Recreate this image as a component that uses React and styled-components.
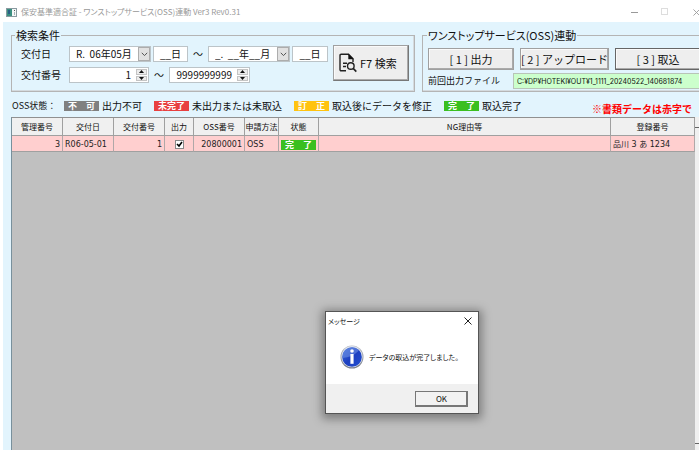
import React from "react";
import styled, { createGlobalStyle, css } from "styled-components";

const Global = createGlobalStyle`
  * { box-sizing: border-box; }
  html, body, #root { height: 100%; margin: 0; }
  body { background: #fff; overflow: hidden; }
  body, button, input, select {
    font-family: "Noto Sans CJK JP", "Noto Sans", sans-serif;
    font-size: 10px;
    line-height: 14px;
    color: #111;
  }
`;

const Window = styled.div`
  position: relative;
  display: flex;
  flex-direction: column;
  height: 100vh;
  overflow: hidden;
`;

const TitleBar = styled.header`
  display: flex;
  align-items: center;
  flex: none;
  height: 22px;
  padding: 2px 0 0 6px;
  gap: 4px;
  color: #999;
  background: #fff;
`;

const TitleText = styled.h1`
  flex: 1;
  margin: 0;
  font-size: 8px;
  line-height: 12px;
  font-weight: 400;
  white-space: nowrap;
  font-feature-settings: "palt";
`;

const CaptionButton = styled.button`
  display: flex;
  align-items: center;
  justify-content: center;
  flex: none;
  width: 26px;
  height: 18px;
  padding: 0;
  border: 0;
  background: none;
`;

const CaptionButtons = styled.div`
  display: flex;
  flex: none;
  gap: 5px;
  margin-right: -10px;
`;

const Client = styled.main`
  display: flex;
  flex-direction: column;
  flex: 1;
  min-height: 0;
  margin-left: 3px;
  padding: 6px 0 0 8px;
  background: #e2f4fd;
`;

const Groups = styled.div`
  display: flex;
  flex: none;
  gap: 7px;
`;

const Group = styled.fieldset`
  min-width: 0;
  margin: 0;
  border: 1px solid #b4b4b4;
  box-shadow: inset -1px -1px 0 #d4dade;
  flex: ${(p) => (p.$grow ? "1 0 0" : "none")};
  margin-right: ${(p) => (p.$grow ? "-10px" : "0")};
  padding: ${(p) => (p.$grow ? "6px 7px 2px 5px" : "4px 5px 8px 9px")};
`;

const Legend = styled.legend`
  margin-left: ${(p) => (p.$flush ? "-1px" : "-6px")};
  padding: 0 1px;
  font-size: 11px;
  line-height: 14px;
  font-feature-settings: ${(p) => (p.$flush ? '"palt"' : "normal")};
`;

const SearchForm = styled.div`
  display: flex;
  gap: 6px;
`;

const FieldRows = styled.div`
  display: flex;
  flex-direction: column;
  gap: 5px;
  width: 306px;
`;

const FieldRow = styled.div`
  display: flex;
  align-items: center;
  height: 16px;
`;

const FieldLabel = styled.label`
  flex: none;
  width: 48px;
  white-space: nowrap;
`;

const Tilde = styled.span`
  flex: none;
  width: 20px;
  text-align: center;
`;

const Frame = styled.div`
  display: flex;
  flex: none;
  height: 16px;
  background: #fff;
  border: 1px solid #bcc4c8;
  width: ${(p) => p.$width}px;
`;

const TextInput = styled.input`
  flex: 1;
  min-width: 0;
  height: 14px;
  padding: 0 5px;
  border: 0;
  outline: 0;
  background: transparent;
  text-align: ${(p) => p.$align || "left"};
`;

const ComboFrame = styled(Frame)`
  display: grid;
  grid-template-columns: 1fr 12px;
  margin-right: 2px;
`;

const ComboSelect = styled.select`
  grid-area: 1 / 1 / 2 / 3;
  appearance: none;
  height: 14px;
  padding: 0 12px 0 6px;
  border: 0;
  outline: 0;
  background: transparent;
`;

const ComboArrow = styled.span`
  grid-area: 1 / 2 / 2 / 3;
  display: flex;
  align-items: center;
  justify-content: center;
  background: #e1e1e1;
  border: 1px solid #adadad;
  pointer-events: none;
`;

const Spinner = styled.div`
  display: flex;
  flex-direction: column;
  flex: none;
  width: 12px;
  padding: 1px 1px 1px 0;
  gap: 1px;
`;

const SpinButton = styled.button`
  display: flex;
  align-items: center;
  justify-content: center;
  flex: 1;
  min-height: 0;
  padding: 0;
  border: 1px solid #c4c4c4;
  background: #ececec;
`;

const raised = css`
  border: 1px solid #a0a0a0;
  border-right-color: #777;
  border-bottom-color: #777;
  box-shadow: inset -1px -1px 0 #aaa, inset 1px 1px 0 #fafafa;
  background: #eee;
`;

const SearchButton = styled.button`
  ${raised}
  display: flex;
  align-items: center;
  gap: 3px;
  width: 76px;
  height: 36px;
  margin-top: -1px;
  padding: 0 5px;
  font-size: 11px;
  white-space: nowrap;
`;

const Actions = styled.div`
  display: grid;
  grid-template-columns: repeat(3, 1fr);
  gap: 6px;
`;

const ActionButton = styled.button`
  ${raised}
  height: 22px;
  padding: 0;
  font-size: 11px;
  white-space: nowrap;
  border-color: ${(p) => (p.$active ? "#666" : "#a0a0a0")};
`;

const OutputRow = styled.div`
  display: flex;
  align-items: center;
  margin-top: 3px;
`;

const OutputLabel = styled.label`
  flex: none;
  width: 85px;
  white-space: nowrap;
  font-size: 9px;
`;

const OutputPath = styled.input`
  flex: 1;
  min-width: 0;
  height: 16px;
  padding: 0 3px;
  border: 1px solid #b8c4b8;
  background: #ccffcc;
  font-family: Inter, "Noto Sans CJK JP", sans-serif;
  font-size: 7px;
`;

const StatusBar = styled.div`
  display: flex;
  align-items: center;
  flex: none;
  height: 25px;
  padding: 3px 0 0 1px;
  white-space: nowrap;
`;

const StatusTitle = styled.span`
  flex: none;
  width: 52px;
  font-size: 9px;
`;

const StatusItem = styled.span`
  display: flex;
  align-items: center;
  flex: none;
  gap: 3px;
  margin-right: 12px;
`;

const Badge = styled.span`
  display: block;
  width: 35px;
  height: 10px;
  background: ${(p) => p.$color};
  color: #fff;
  font-size: 9px;
  line-height: 10px;
  font-weight: 700;
  text-align: center;
  white-space: pre;
`;

const Warning = styled.strong`
  flex: none;
  margin-left: 58px;
  padding-top: 5px;
  color: #f00;
`;

const GridArea = styled.div`
  display: flex;
  flex: 1;
  min-height: 0;
`;

const GridPane = styled.div`
  flex: 1;
  min-width: 0;
  background: #c0c0c0;
  border-top: 1px solid #909090;
  border-left: 1px solid #78909c;
`;

const Grid = styled.table`
  width: 100%;
  table-layout: fixed;
  border-collapse: separate;
  border-spacing: 0;
  font-size: 9px;
  line-height: 12px;
`;

const Col = styled.col`
  width: ${(p) => (p.$width ? `${p.$width}px` : "auto")};
`;

const HeadCell = styled.th`
  height: 18px;
  padding: 0;
  font-weight: 400;
  font-size: 8px;
  white-space: nowrap;
  background: #f0f0f0;
  border-right: 1px solid #a0a0a0;
  border-bottom: 1px solid #a0a0a0;
`;

const Cell = styled.td`
  height: 16px;
  padding: 2px 2px 0;
  background: #ffcfcf;
  border-right: 1px solid #b0a8a8;
  border-bottom: 1px solid #a0a0a0;
  font-family: "DejaVu Sans", "Noto Sans CJK JP", sans-serif;
  font-size: 8px;
  color: #222;
  white-space: nowrap;
  text-align: ${(p) => p.$align || "left"};
`;

const Tick = styled.input`
  appearance: none;
  display: block;
  width: 9px;
  height: 9px;
  margin: 0 auto;
  border: 1px solid #888;
  background: #fff;
  &:checked {
    background: #fff url("data:image/svg+xml,%3Csvg xmlns='http://www.w3.org/2000/svg' viewBox='0 0 7 7'%3E%3Cpath d='M1 3l2 2 3-4' fill='none' stroke='%23000' stroke-width='1.6'/%3E%3C/svg%3E") center / 7px 7px;
  }
`;

const ScrollTrack = styled.div`
  flex: none;
  display: flex;
  flex-direction: column;
  justify-content: space-between;
  width: 4px;
  padding: 10px 0 6px;
  background: #f0f0f0;
`;

const ScrollLine = styled.span`
  height: 1px;
  background: #666;
`;

const Dialog = styled.section`
  position: absolute;
  left: 325px;
  top: 311px;
  width: 154px;
  border: 1px solid #555;
  background: #fff;
  box-shadow: 0 2px 9px 3px rgba(0, 0, 0, 0.35);
  font-size: 7px;
  font-feature-settings: "palt";
`;

const DialogHead = styled.div`
  display: flex;
  align-items: center;
  justify-content: space-between;
  height: 18px;
  padding-left: 2px;
`;

const DialogTitle = styled.h2`
  margin: 0;
  font-size: 7px;
  line-height: 12px;
  font-weight: 400;
`;

const CloseButton = styled.button`
  display: flex;
  align-items: center;
  justify-content: center;
  width: 21px;
  height: 18px;
  padding: 0;
  border: 0;
  background: none;
`;

const DialogBody = styled.div`
  display: flex;
  align-items: center;
  gap: 5px;
  height: 54px;
  padding: 0 0 0 14px;
  white-space: nowrap;
`;

const DialogFoot = styled.div`
  display: flex;
  justify-content: flex-end;
  padding: 7px 10px 6px;
  background: #f0f0f0;
`;

const OkButton = styled.button`
  width: 53px;
  height: 16px;
  padding: 0;
  border: 1px solid #777;
  box-shadow: inset -1px -1px 0 #777;
  background: #f2f2f2;
  font-size: 8px;
  line-height: 12px;
`;

const AppIcon = () => (
  <svg width="11" height="9" viewBox="0 0 11 9" aria-hidden="true">
    <rect x="0.5" y="0.5" width="10" height="8" fill="#f4f7f7" stroke="#8a9aa0" />
    <rect x="1" y="1" width="5" height="7" fill="#3a8f80" />
    <rect x="2" y="2" width="2" height="4" fill="#2b5f86" />
    <rect x="8" y="2" width="1" height="1" fill="#555" />
    <rect x="8" y="4" width="1" height="3" fill="#a9b4b8" />
  </svg>
);

const SearchIcon = () => (
  <svg width="18" height="20" viewBox="0 0 18 20" fill="none" stroke="#222" strokeWidth="1.4" aria-hidden="true">
    <path d="M7 17.8H2.2Q1 17.8 1 16.4V2.4Q1 1.2 2.2 1.2H9.5L14 5.8V9" />
    <path d="M9.3 0.8V6.2H14.8Z" fill="#111" stroke="none" />
    <path d="M4 10.3H8M4 13.5H7" />
    <circle cx="11.8" cy="13" r="3.3" />
    <path d="M14.2 15.4L17.3 18.6" strokeWidth="1.6" />
  </svg>
);

const Chevron = () => (
  <svg width="7" height="5" viewBox="0 0 7 5" aria-hidden="true">
    <path d="M0.8 0.8L3.5 3.6L6.2 0.8" fill="none" stroke="#555" />
  </svg>
);

const Triangle = ({ up }) => (
  <svg width="5" height="3" viewBox="0 0 5 3" aria-hidden="true">
    <path d={up ? "M0 3L2.5 0L5 3Z" : "M0 0L2.5 3L5 0Z"} fill="#111" />
  </svg>
);

const Cross = ({ color, size }) => (
  <svg width={size} height={size} viewBox="0 0 8 8" aria-hidden="true">
    <path d="M0.5 0.5L7.5 7.5M7.5 0.5L0.5 7.5" stroke={color} fill="none" />
  </svg>
);

const InfoIcon = () => (
  <svg width="24" height="24" viewBox="0 0 24 24" aria-hidden="true">
    <defs>
      <linearGradient id="rim" x1="0" y1="0" x2="0" y2="1">
        <stop offset="0" stopColor="#b8bcc4" />
        <stop offset="1" stopColor="#777c88" />
      </linearGradient>
      <linearGradient id="ball" x1="0" y1="0" x2="1" y2="1">
        <stop offset="0" stopColor="#3f6fdc" />
        <stop offset="0.5" stopColor="#1d3fc0" />
        <stop offset="1" stopColor="#2450d0" />
      </linearGradient>
    </defs>
    <circle cx="12" cy="12" r="11.5" fill="url(#rim)" />
    <circle cx="12" cy="11.7" r="10.6" fill="#dfe4ee" />
    <circle cx="12" cy="12" r="9.8" fill="url(#ball)" />
    <path d="M2.6 13A9.5 9.5 0 0 1 19 5.5Q12 12.5 2.6 13Z" fill="#7296e6" opacity="0.55" />
    <circle cx="12" cy="6" r="1.8" fill="#fff" />
    <path d="M10.4 9H13.6V18.8H10.4Z" fill="#fff" />
  </svg>
);

const Combo = ({ id, label, value }) => (
  <ComboFrame $width={82}>
    <ComboSelect id={id} aria-label={label} defaultValue={value}>
      <option>{value}</option>
    </ComboSelect>
    <ComboArrow><Chevron /></ComboArrow>
  </ComboFrame>
);

const DayField = ({ label, width }) => (
  <Frame $width={width}>
    <TextInput aria-label={label} defaultValue="__日" $align="center" />
  </Frame>
);

const NumberField = ({ id, label, value, width }) => (
  <Frame $width={width}>
    <TextInput id={id} aria-label={label} defaultValue={value} $align="right" />
    <Spinner>
      <SpinButton aria-label="増やす"><Triangle up /></SpinButton>
      <SpinButton aria-label="減らす"><Triangle /></SpinButton>
    </Spinner>
  </Frame>
);

const statuses = [
  { badge: "不　可", color: "#808080", text: "出力不可" },
  { badge: "未完了", color: "#e84040", text: "未出力または未取込" },
  { badge: "訂　正", color: "#ffc310", text: "取込後にデータを修正" },
  { badge: "完　了", color: "#3abf20", text: "取込完了" },
];

const columns = [
  ["管理番号", 51], ["交付日", 51], ["交付番号", 51], ["出力", 29], ["OSS番号", 51],
  ["申請方法", 34], ["状態", 40], ["NG理由等", 0], ["登録番号", 84],
];

export default function App() {
  return (
    <Window>
      <Global />
      <TitleBar>
        <AppIcon />
        <TitleText>保安基準適合証 - ワンストップサービス(OSS)連動 Ver3 Rev0.31</TitleText>
        <CaptionButtons>
          <CaptionButton aria-label="最小化">
            <svg width="7" height="7" viewBox="0 0 7 7"><path d="M0 3.5H7" stroke="#999" /></svg>
          </CaptionButton>
          <CaptionButton aria-label="最大化">
            <svg width="8" height="8" viewBox="0 0 8 8"><rect x="0.5" y="0.5" width="6" height="6" fill="none" stroke="#ddd" /></svg>
          </CaptionButton>
          <CaptionButton aria-label="閉じる"><Cross color="#999" size={7} /></CaptionButton>
        </CaptionButtons>
      </TitleBar>
      <Client>
        <Groups>
          <Group>
            <Legend>検索条件</Legend>
            <SearchForm>
              <FieldRows>
                <FieldRow>
                  <FieldLabel htmlFor="month-from">交付日</FieldLabel>
                  <Combo id="month-from" value="R.&nbsp; 06年05月" />
                  <DayField label="交付日 開始日" width={35} />
                  <Tilde>～</Tilde>
                  <Combo label="交付日 終了月" value="_.&nbsp; __年__月" />
                  <DayField label="交付日 終了日" width={36} />
                </FieldRow>
                <FieldRow>
                  <FieldLabel htmlFor="number-from">交付番号</FieldLabel>
                  <NumberField id="number-from" value="1" width={80} />
                  <Tilde>～</Tilde>
                  <NumberField label="交付番号 終了" value="9999999999" width={81} />
                </FieldRow>
              </FieldRows>
              <SearchButton><SearchIcon />F7 検索</SearchButton>
            </SearchForm>
          </Group>
          <Group $grow>
            <Legend $flush>ワンストップサービス(OSS)連動</Legend>
            <Actions>
              <ActionButton>[ 1 ] 出力</ActionButton>
              <ActionButton>[ 2 ] アップロード</ActionButton>
              <ActionButton $active>[ 3 ] 取込</ActionButton>
            </Actions>
            <OutputRow>
              <OutputLabel htmlFor="output-path">前回出力ファイル</OutputLabel>
              <OutputPath id="output-path" readOnly value="C:¥DP¥HOTEKI¥OUT¥1_1111_20240522_140681874" />
            </OutputRow>
          </Group>
        </Groups>
        <StatusBar>
          <StatusTitle>OSS状態：</StatusTitle>
          {statuses.map((s) => (
            <StatusItem key={s.text}>
              <Badge $color={s.color}>{s.badge}</Badge>
              {s.text}
            </StatusItem>
          ))}
          <Warning>※書類データは赤字で</Warning>
        </StatusBar>
        <GridArea>
          <GridPane>
            <Grid>
              <colgroup>
                {columns.map(([name, width]) => <Col key={name} $width={width} />)}
              </colgroup>
              <thead>
                <tr>{columns.map(([name]) => <HeadCell key={name}>{name}</HeadCell>)}</tr>
              </thead>
              <tbody>
                <tr>
                  <Cell $align="right">3</Cell>
                  <Cell>R06-05-01</Cell>
                  <Cell $align="right">1</Cell>
                  <Cell><Tick type="checkbox" aria-label="出力" defaultChecked /></Cell>
                  <Cell $align="right">20800001</Cell>
                  <Cell>OSS</Cell>
                  <Cell><Badge $color="#3abf20">完　了</Badge></Cell>
                  <Cell />
                  <Cell>品川 3 あ 1234</Cell>
                </tr>
              </tbody>
            </Grid>
          </GridPane>
          <ScrollTrack><ScrollLine /><ScrollLine /></ScrollTrack>
        </GridArea>
      </Client>
      <Dialog role="dialog" aria-labelledby="message-title">
        <DialogHead>
          <DialogTitle id="message-title">メッセージ</DialogTitle>
          <CloseButton aria-label="閉じる"><Cross color="#222" size={8} /></CloseButton>
        </DialogHead>
        <DialogBody><InfoIcon />データの取込が完了しました。</DialogBody>
        <DialogFoot><OkButton>OK</OkButton></DialogFoot>
      </Dialog>
    </Window>
  );
}
